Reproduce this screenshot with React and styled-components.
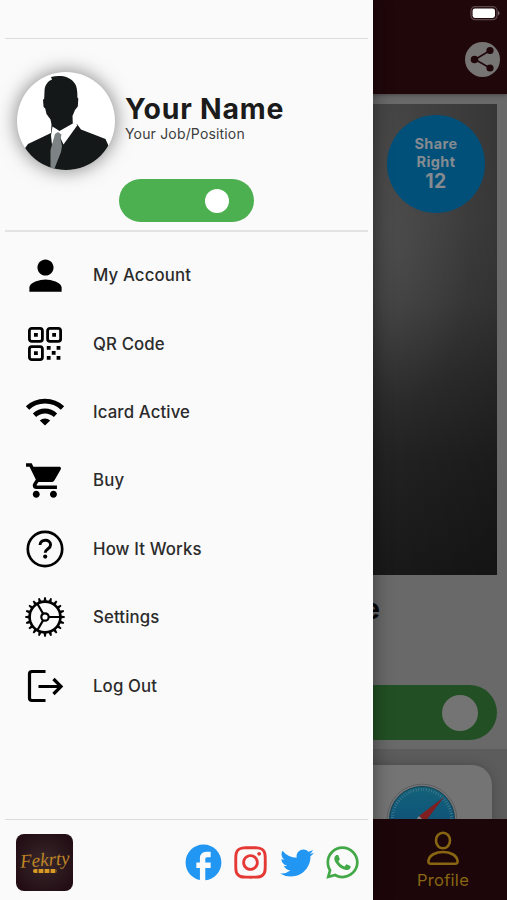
import styled, { createGlobalStyle } from 'styled-components';
import { IoMdPerson, IoMdCart } from 'react-icons/io';
import { IoLogoTwitter } from 'react-icons/io5';
import { MdFacebook } from 'react-icons/md';
import { FaInstagram, FaWhatsapp } from 'react-icons/fa';

const GlobalStyle = createGlobalStyle`
  * {
    box-sizing: border-box;
  }

  body {
    margin: 0;
    font-family: Inter, "Liberation Sans", sans-serif;
  }
`;

const Screen = styled.div`
  position: relative;
  width: 507px;
  height: 900px;
  overflow: hidden;
  background: #696969;
`;

/* Page behind the drawer */
const Page = styled.div`
  display: flex;
  flex-direction: column;
  height: 100%;
`;

const TopBar = styled.header`
  display: flex;
  flex-direction: column;
  align-items: flex-end;
  gap: 21px;
  flex: none;
  height: 94px;
  padding: 6px 7px 0 0;
  background: #1f070a;
  box-shadow: 0 1px 4px rgba(0, 0, 0, 0.35);
`;

const ShareButton = styled.div`
  display: flex;
  width: 35px;
  height: 35px;
  border-radius: 50%;
  background: #777474;
`;

const Content = styled.main`
  flex: 1;
  min-height: 0;
  display: flex;
  flex-direction: column;
  overflow: hidden;
`;

const Cover = styled.div`
  display: flex;
  justify-content: flex-end;
  flex: none;
  height: 471px;
  margin: 10px 10px 0;
  padding: 11px 12px;
  background:
    radial-gradient(ellipse 70px 150px at 390px 150px, rgba(100, 100, 100, 0.22), transparent),
    linear-gradient(90deg, transparent 370px, rgba(0, 0, 0, 0.22) 100%),
    linear-gradient(180deg, #464646 0%, #474747 25%, #404040 42%, #303030 58%, #222 76%, #191919 100%);
`;

const ShareBadge = styled.div`
  display: flex;
  flex-direction: column;
  align-items: center;
  width: 98px;
  height: 98px;
  padding-top: 20px;
  border-radius: 50%;
  background: #00507a;
  color: #858b90;
  font-size: 14.5px;
  font-weight: 700;
  line-height: 17.5px;
  letter-spacing: 0.4px;

  strong {
    font-size: 19.5px;
    font-weight: 700;
    line-height: 23.5px;
  }
`;

const PageName = styled.div`
  flex: none;
  height: 110px;
  padding: 17px 127px 0 0;
  text-align: right;
  font-size: 28px;
  font-weight: 700;
  line-height: 34px;
  color: #080808;
`;

const PageToggle = styled.div`
  display: flex;
  align-items: center;
  justify-content: flex-end;
  flex: none;
  height: 55px;
  margin: 0 10px;
  padding-right: 19px;
  border-radius: 28px;
  background: #225024;

  span {
    width: 36px;
    height: 36px;
    border-radius: 50%;
    background: #747474;
  }
`;

const Links = styled.div`
  flex: 1;
  min-height: 0;
  margin-top: 9px;
  padding: 16px 15px 0;
  background: #5c5c5c;
`;

const LinkCard = styled.div`
  display: flex;
  justify-content: flex-end;
  height: 110px;
  padding: 18px 34px 0 0;
  border-radius: 20px;
  background: #747474;
  box-shadow: 0 0 12px rgba(0, 0, 0, 0.2);

  svg {
    flex: none;
  }
`;

const TabBar = styled.nav`
  display: flex;
  justify-content: flex-end;
  flex: none;
  height: 81px;
  padding-right: 21px;
  background: #1d0609;
`;

const Tab = styled.div`
  display: flex;
  flex-direction: column;
  align-items: center;
  width: 86px;
  padding-top: 12px;
  color: #886612;
  font-size: 16.5px;
  line-height: 20px;
  letter-spacing: 0.3px;

  svg {
    margin-bottom: 4px;
  }
`;

/* Drawer */
const Drawer = styled.aside`
  position: absolute;
  top: 0;
  left: 0;
  display: flex;
  flex-direction: column;
  width: 373px;
  height: 900px;
  padding: 38px 5px 0;
  background: #fafafa;
  box-shadow: 0 0 18px rgba(0, 0, 0, 0.45);
`;

const ProfileHeader = styled.section`
  flex: none;
  height: 194px;
  border-top: 1px solid #dcdcdc;
  border-bottom: 2px solid #e3e3e3;
`;

const Identity = styled.div`
  display: flex;
  align-items: flex-start;
  gap: 10px;
  height: 140px;
  padding: 33px 0 0 12px;
`;

const Avatar = styled.div`
  width: 98px;
  height: 98px;
  border-radius: 50%;
  overflow: hidden;
  background: #fff;
  box-shadow: 0 0 19px rgba(0, 0, 0, 0.5);

  svg {
    display: block;
  }
`;

const Names = styled.div`
  padding-top: 19px;
  color: #1b1b1b;

  h1 {
    margin: 0;
    font-size: 28.4px;
    font-weight: 700;
    line-height: 35px;
    letter-spacing: 0.8px;
  }

  p {
    margin: -1px 0 0;
    font-size: 14px;
    line-height: 17px;
    letter-spacing: 0.17px;
    color: #3c3c3c;
  }
`;

const Toggle = styled.div`
  display: flex;
  align-items: center;
  justify-content: flex-end;
  width: 135px;
  height: 43px;
  margin: 0 0 0 114px;
  padding-right: 25px;
  border-radius: 22px;
  background: #4caf50;

  span {
    width: 24px;
    height: 24px;
    border-radius: 50%;
    background: #fff;
  }
`;

const Menu = styled.ul`
  flex: 1;
  margin: 0;
  padding: 9px 0 0;
  list-style: none;
`;

const MenuItem = styled.li`
  display: flex;
  align-items: center;
  height: 68.4px;
  color: #2b2b2b;
  font-size: 16.8px;
  font-weight: 500;
  letter-spacing: 0.13px;
`;

const IconSlot = styled.span`
  display: flex;
  align-items: center;
  justify-content: center;
  flex: none;
  width: 80px;
  margin-right: 8px;
  padding-right: ${props => props.$nudge || 0}px;
  color: #000;
`;

const Footer = styled.footer`
  display: flex;
  align-items: center;
  justify-content: space-between;
  flex: none;
  height: 81px;
  padding: 5px 2px 0 11px;
  border-top: 1px solid #dcdcdc;
`;

const Brand = styled.div`
  display: flex;
  flex-direction: column;
  align-items: center;
  width: 57px;
  height: 57px;
  padding-top: 15px;
  border-radius: 8px;
  background: radial-gradient(circle, #3a282d, #210d13 85%);
  color: #bd8524;
  font-family: "Liberation Serif", serif;
  font-size: 19px;
  font-style: italic;
  line-height: 21px;

  span {
    transform: rotate(-4deg);
  }

  small {
    width: 24px;
    height: 4px;
    margin-top: -1px;
    border-radius: 2px;
    background: repeating-linear-gradient(90deg, #d89a24 0 4px, #76501b 4px 6px);
  }
`;

const Socials = styled.div`
  display: flex;
  align-items: center;

  svg {
    display: block;
  }
`;

const Social = styled.span`
  display: flex;
  align-items: center;
  justify-content: center;
  width: 46.3px;
  height: 44px;
  color: ${props => props.$color};
`;

function BatteryIcon() {
  return (
    <svg width="32" height="15" viewBox="0 0 32 15">
      <rect x="3" y="0.7" width="26" height="13" rx="4" fill="none" stroke="#5d484b" strokeWidth="1.2" />
      <rect x="4.6" y="2.5" width="22.4" height="9.4" rx="2.3" fill="#fff" />
      <path d="M30 5c2 .7 2 3.700 0 4.400z" fill="#79686b" />
    </svg>
  );
}

function ShareIcon() {
  return (
    <svg width="35" height="35" viewBox="0 0 35 35">
      <g fill="#1f070a" stroke="#1f070a" strokeWidth="1.6">
        <path d="M25 8.500 10 17.500l15 8.500" fill="none" />
        <circle cx="25" cy="8.500" r="2.800" />
        <circle cx="9.500" cy="17.500" r="3" />
        <circle cx="25" cy="26" r="2.800" />
      </g>
    </svg>
  );
}

function QrIcon() {
  return (
    <svg width="34" height="34" viewBox="0 0 34 34">
      <g fill="none" stroke="#000" strokeWidth="2.800">
        <rect x="1.400" y="1.400" width="13" height="13" rx="2.400" />
        <rect x="19.600" y="1.400" width="13" height="13" rx="2.400" />
        <rect x="1.400" y="19.600" width="13" height="13" rx="2.400" />
      </g>
      <path d="M6 6h3.800v3.800H6zM24.200 6H28v3.800h-3.800zM6 24.200h3.800V28H6zM18.800 19h3.800v3.800h-3.800zM28.600 19h3.800v3.800h-3.800zM23.800 24h3.800v3.800h-3.800zM18.800 29h3.800v3.800h-3.800zM28.600 29h3.800v3.800h-3.800z" />
    </svg>
  );
}

function WifiIcon() {
  return (
    <svg width="40" height="30" viewBox="0 0 40 30" fill="none" stroke="#000" strokeWidth="4.800">
      <path d="M2.500 11C12 1.800 28 1.800 37.500 11" />
      <path d="M9.500 18.200c6-5.600 15-5.600 21 0" />
      <path d="m14.800 23.500 5.200 5 5.200-5c-3-2.700-7.400-2.700-10.400 0z" fill="#000" stroke="none" />
    </svg>
  );
}

function HelpIcon() {
  return (
    <svg width="38" height="38" viewBox="0 0 38 38" fill="none" stroke="#000">
      <circle cx="19" cy="19" r="17.200" strokeWidth="2.700" />
      <path d="M14 15c0-6.200 10.600-6.400 10.600-.3 0 4.300-5.400 4.200-5.400 8" strokeWidth="2.900" />
      <circle cx="19.200" cy="26.600" r="2.100" fill="#000" stroke="none" />
    </svg>
  );
}

// 20 teeth around the rim, three spokes from the hub
function GearIcon() {
  return (
    <svg width="42" height="42" viewBox="-21 -21 42 42" fill="none" stroke="#000">
      <circle r="15.400" strokeWidth="2.600" />
      <circle r="3.700" strokeWidth="2.200" />
      <path d="M4 0H15M-2 3.460-7.500 13M-2-3.460-7.500-13" strokeWidth="2.200" />
      {Array.from({ length: 20 }, (_, i) => (
        <path key={i} d="M16 -1.500 19.800 -.8V.8L16 1.500z" fill="#000" stroke="none" transform={`rotate(${i * 18})`} />
      ))}
    </svg>
  );
}

function LogoutIcon() {
  return (
    <svg width="40" height="40" viewBox="0 0 40 40" fill="none" stroke="#000" strokeWidth="3.200">
      <path d="M20.500 5.500H7q-2.500 0-2.500 2.500v24q0 2.500 2.500 2.500h13.500" />
      <path d="M13.500 20.500H36M28.500 13l7.500 7.500-7.500 7.500" />
    </svg>
  );
}

function ProfileIcon() {
  return (
    <svg width="34" height="35" viewBox="0 0 34 35" fill="none" stroke="currentColor" strokeWidth="2.600">
      <ellipse cx="17" cy="9.500" rx="7" ry="7.800" />
      <path d="M2.400 30c1.500-12 27.700-12 29.200 0q.3 2.800-2.600 2.800H5q-2.900 0-2.600-2.800z" />
    </svg>
  );
}

function Silhouette() {
  return (
    <svg width="98" height="98" viewBox="0 0 98 98">
      <path d="M35 7.500 34 5c9-2 18-1 23 5.500 3 3 3.500 9 3.400 15l.9 1-.5 8-2.800 3.500L55.500 44l.3 7.500L60 52l4 5.500 24.500 9.500 4 9V98H6V79l5-7 23-11 .5-8.500-1-5-4-5.500-1.300-5.500-1.600-1.500-.6-7 1.200-1.500.3-7C27.500 13 31 9 35 7.500z" fill="#151819" />
      <path d="m35.500 54.500-1.500 9 1 9.500 4-9.500 2-2.500 5.500 11.500L60.500 53 57.500 50.500 42.500 59z" fill="#fff" />
      <path d="m38 62 3-2 3.500 2.500-1 4.500 1.500 7-1 6-6.500 16.500-4-.5V78z" fill="#7d8384" />
    </svg>
  );
}

function CompassIcon() {
  return (
    <svg width="72" height="72" viewBox="0 0 72 72">
      <defs>
        <linearGradient id="compass" x1="0" y1="0" x2="0" y2="1">
          <stop offset="0" stopColor="#12627a" />
          <stop offset="1" stopColor="#0e4777" />
        </linearGradient>
      </defs>
      <circle cx="36" cy="36" r="34.800" fill="#727477" stroke="#5c5e60" />
      <circle cx="36" cy="36" r="32.500" fill="url(#compass)" stroke="#17414d" />
      <circle cx="36" cy="36" r="29.500" fill="none" stroke="#548391" strokeWidth="3" strokeDasharray=".6 2" />
      <path d="m58 14-25 19 6 6z" fill="#811f20" />
      <path d="m14 58 19-25 6 6z" fill="#858585" />
    </svg>
  );
}

const menuItems = [
  { label: 'My Account', icon: <IoMdPerson size={43} /> },
  { label: 'QR Code', icon: <QrIcon /> },
  { label: 'Icard Active', icon: <WifiIcon /> },
  { label: 'Buy', icon: <IoMdCart size={43} />, nudge: 4 },
  { label: 'How It Works', icon: <HelpIcon /> },
  { label: 'Settings', icon: <GearIcon /> },
  { label: 'Log Out', icon: <LogoutIcon /> },
];

function App() {
  return (
    <>
      <GlobalStyle />
      <Screen>
        <Page>
          <TopBar>
            <BatteryIcon />
            <ShareButton>
              <ShareIcon />
            </ShareButton>
          </TopBar>
          <Content>
            <Cover>
              <ShareBadge>
                <span>Share</span>
                <span>Right</span>
                <strong>12</strong>
              </ShareBadge>
            </Cover>
            <PageName>Your Name</PageName>
            <PageToggle>
              <span />
            </PageToggle>
            <Links>
              <LinkCard>
                <CompassIcon />
              </LinkCard>
            </Links>
          </Content>
          <TabBar>
            <Tab>
              <ProfileIcon />
              Profile
            </Tab>
          </TabBar>
        </Page>

        <Drawer>
          <ProfileHeader>
            <Identity>
              <Avatar>
                <Silhouette />
              </Avatar>
              <Names>
                <h1>Your Name</h1>
                <p>Your Job/Position</p>
              </Names>
            </Identity>
            <Toggle>
              <span />
            </Toggle>
          </ProfileHeader>
          <Menu>
            {menuItems.map(item => (
              <MenuItem key={item.label}>
                <IconSlot $nudge={item.nudge}>{item.icon}</IconSlot>
                {item.label}
              </MenuItem>
            ))}
          </Menu>
          <Footer>
            <Brand>
              <span>Fekrty</span>
              <small />
            </Brand>
            <Socials>
              <Social $color="#2196f3"><MdFacebook size={43} /></Social>
              <Social $color="#e53935"><FaInstagram size={37} /></Social>
              <Social $color="#2196f3"><IoLogoTwitter size={36} /></Social>
              <Social $color="#43a847"><FaWhatsapp size={37} /></Social>
            </Socials>
          </Footer>
        </Drawer>
      </Screen>
    </>
  );
}

export default App;
